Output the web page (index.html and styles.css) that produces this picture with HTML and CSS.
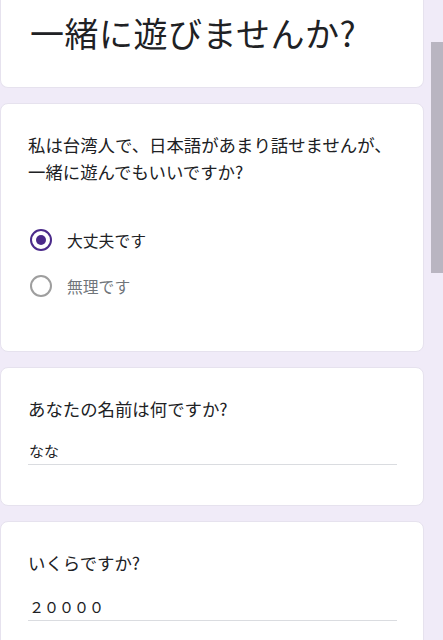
FILE: index.html
```html
<!DOCTYPE html>
<html lang="ja">
<head>
<meta charset="utf-8">
<link rel="stylesheet" href="styles.css">
</head>
<body>
<div class="page">
  <div class="card title-card">
    <h1 class="title">一緒に遊びませんか?</h1>
  </div>
  <div class="card q-card">
    <p class="question">私は台湾人で、日本語があまり話せませんが、<br>一緒に遊んでもいいですか?</p>
    <div class="options">
      <div class="option">
        <span class="radio checked"></span>
        <span class="label">大丈夫です</span>
      </div>
      <div class="option">
        <span class="radio"></span>
        <span class="label muted">無理です</span>
      </div>
    </div>
  </div>
  <div class="card q-card text-card">
    <p class="question">あなたの名前は何ですか?</p>
    <div class="answer">なな</div>
  </div>
  <div class="card q-card text-card">
    <p class="question">いくらですか?</p>
    <div class="answer">２００００</div>
  </div>
</div>
<div class="scrollbar"><div class="thumb"></div></div>
</body>
</html>
```

FILE: styles.css
```css
html, body {
  margin: 0;
  padding: 0;
  height: 100%;
  overflow: hidden;
}
body {
  background: #f0ebf8;
  font-family: "Noto Sans CJK JP", "Noto Sans", sans-serif;
  color: #202124;
}
.page {
  width: 424px;
  display: flex;
  flex-direction: column;
  gap: 15px;
}
.card {
  background: #fff;
  border: 1px solid #e6e2ee;
  border-radius: 8px;
  box-sizing: border-box;
}
.title-card {
  border-top: none;
  border-top-left-radius: 0;
  border-top-right-radius: 0;
  height: 88px;
  padding: 12px 0 0 29px;
}
.title {
  margin: 0;
  font-weight: 400;
  font-size: 34px;
  line-height: 42px;
  letter-spacing: 0.5px;
  color: #202124;
}
.q-card {
  padding: 27px 27px 0 27px;
  height: 249px;
}
.question {
  margin: 0;
  font-size: 17.4px;
  line-height: 27px;
  color: #202124;
}
.options {
  margin-top: 35px;
  display: flex;
  flex-direction: column;
  gap: 6px;
}
.option {
  display: flex;
  align-items: center;
  height: 40px;
  gap: 15px;
  padding-left: 2px;
}
.radio {
  width: 22px;
  height: 22px;
  box-sizing: border-box;
  border: 2px solid #9e9e9e;
  border-radius: 50%;
  display: flex;
  align-items: center;
  justify-content: center;
}
.radio.checked {
  border-color: #4b2a8a;
}
.radio.checked::after {
  content: "";
  width: 10px;
  height: 10px;
  border-radius: 50%;
  background: #4b2a8a;
}
.label {
  font-size: 15.8px;
  color: #202124;
}
.label.muted {
  color: #70757a;
}
.text-card {
  height: 139px;
}
.answer {
  margin-top: 17px;
  width: 368px;
  font-size: 15px;
  line-height: 24px;
  padding-bottom: 1px;
  padding-left: 1px;
  border-bottom: 1px solid #dadce0;
  color: #202124;
}
.text-card:last-child .answer {
  margin-top: 19px;
}
.scrollbar {
  position: absolute;
  top: 0;
  right: 0;
  width: 12px;
  height: 640px;
}
.thumb {
  margin-top: 42px;
  height: 231px;
  background: #b9b5c1;
}
```
